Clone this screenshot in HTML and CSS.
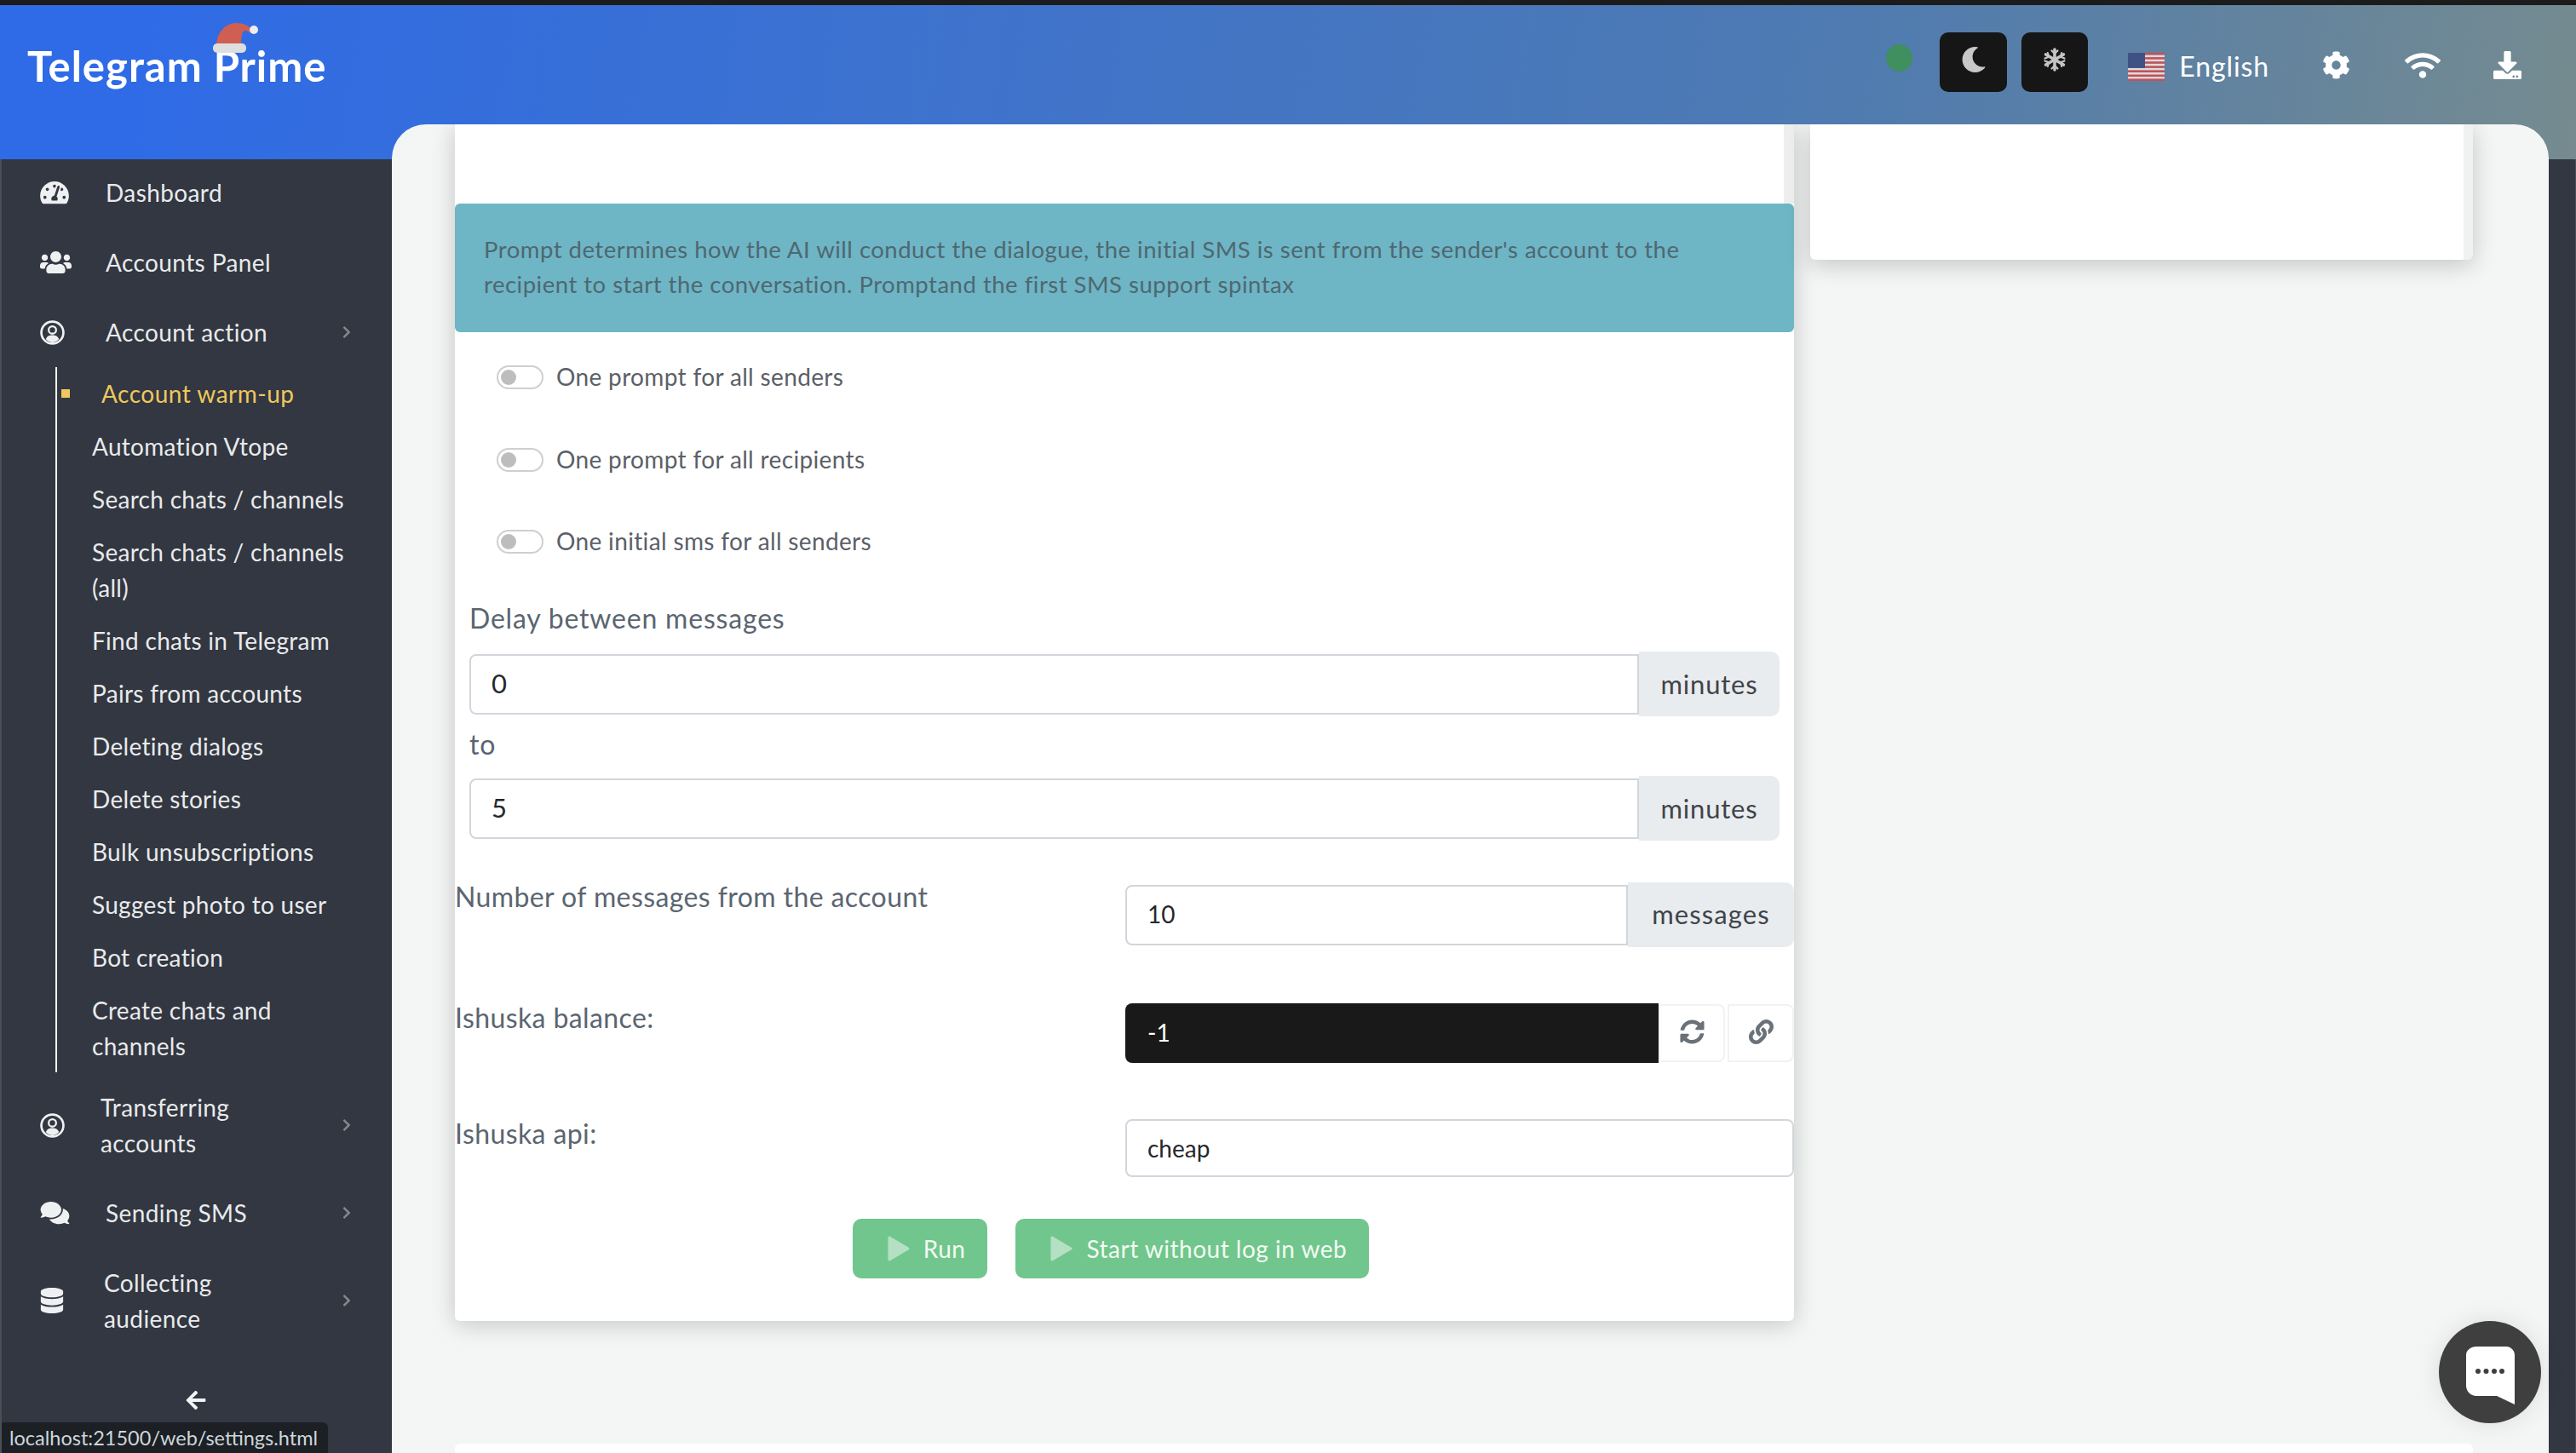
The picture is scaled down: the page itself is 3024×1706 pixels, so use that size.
FILE: index.html
```html
<!DOCTYPE html>
<html lang="en">
<head>
<meta charset="utf-8">
<title>Telegram Prime</title>
<link rel="stylesheet" href="styles.css">
</head>
<body>
<div class="strip"></div>
<header class="topbar">
  <div class="logo">
    <svg class="hat" viewBox="0 0 54 36"><path d="M4 25C5 12 13 1 27 0c9 0 15 3 19 8l-4 3c-3-3-5-3-7 0-2 5-2 10-2 14z" fill="#cf5f52"/><rect x="0" y="24" width="39" height="11" rx="5" fill="#dedede"/><circle cx="48" cy="8" r="5" fill="#ececec"/></svg>
    Telegram Prime
  </div>
  <div class="top-actions">
    <span class="dot"></span>
    <button class="dark-btn dark-btn--moon"><svg class="moon" viewBox="0 0 512 512"><path d="M283.211 512c78.962 0 151.079-35.925 198.857-94.792 7.068-8.708-.639-21.43-11.562-19.35-124.203 23.654-238.262-71.576-238.262-196.954 0-72.222 38.662-138.635 101.498-174.394 9.686-5.512 7.25-20.197-3.756-22.23A258.156 258.156 0 0 0 283.211 0c-141.309 0-256 114.511-256 256 0 141.309 114.511 256 256 256z"/></svg></button>
    <button class="dark-btn dark-btn--snow"><svg class="snow" viewBox="0 0 28 28"><g stroke-width="3.6" stroke-linecap="round" fill="none"><path d="M14 2v24M3.6 8l20.8 12M3.6 20l20.8-12"/></g><g stroke-width="2.2" stroke-linecap="round" fill="none"><path d="M10.5 3.5L14 7l3.500-3.500M10.500 24.500L14 21l3.500 3.500M2.500 12.500L7 10.800 5.800 6M25.500 15.500L21 17.200l1.200 4.800M2.500 15.500L7 17.200 5.800 22M25.500 12.500L21 10.800 22.200 6"/></g></svg></button>
    <svg class="flag" viewBox="0 0 43 33"><rect width="43" height="33" fill="#dcdcdc"/><g fill="#c0525a"><rect y="0" width="43" height="2.600"/><rect y="5.100" width="43" height="2.600"/><rect y="10.200" width="43" height="2.600"/><rect y="15.300" width="43" height="2.600"/><rect y="20.400" width="43" height="2.600"/><rect y="25.500" width="43" height="2.600"/><rect y="30.400" width="43" height="2.600"/></g><rect width="20" height="17.800" fill="#3f5285"/></svg>
    <span class="lang">English</span>
    <svg class="top-icon top-icon--gear" viewBox="0 0 512 512"><path d="M487.4 315.7l-42.6-24.6c4.300-23.200 4.300-47 0-70.200l42.600-24.600c4.900-2.800 7.100-8.600 5.500-14-11.100-35.600-30-67.800-54.700-94.600-3.800-4.100-10-5.100-14.800-2.300L380.800 110c-17.900-15.400-38.500-27.300-60.800-35.100V25.800c0-5.600-3.900-10.500-9.400-11.700-36.700-8.200-74.300-7.800-109.200 0-5.500 1.200-9.400 6.100-9.400 11.700V75c-22.200 7.900-42.800 19.800-60.800 35.100L88.700 85.500c-4.900-2.800-11-1.900-14.800 2.300-24.700 26.700-43.600 58.900-54.700 94.600-1.700 5.400.6 11.200 5.500 14L67.300 221c-4.300 23.200-4.300 47 0 70.200l-42.600 24.600c-4.900 2.800-7.100 8.600-5.500 14 11.100 35.600 30 67.800 54.700 94.600 3.800 4.100 10 5.100 14.800 2.300l42.600-24.600c17.900 15.400 38.500 27.300 60.800 35.100v49.200c0 5.600 3.900 10.500 9.400 11.700 36.700 8.200 74.300 7.800 109.200 0 5.500-1.200 9.400-6.100 9.400-11.700v-49.200c22.200-7.900 42.800-19.800 60.800-35.100l42.600 24.600c4.900 2.800 11 1.900 14.800-2.300 24.700-26.700 43.600-58.900 54.700-94.600 1.500-5.500-.7-11.300-5.600-14.100zM256 336c-44.100 0-80-35.900-80-80s35.900-80 80-80 80 35.900 80 80-35.900 80-80 80z"/></svg>
    <svg class="top-icon top-icon--wifi" viewBox="0 0 640 512"><path d="M634.91 154.88C457.74-8.99 182.19-8.93 5.09 154.88c-6.66 6.16-6.79 16.59-.35 22.98l34.24 33.97c6.14 6.1 16.02 6.23 22.4.38 145.92-133.68 371.3-133.71 517.25 0 6.38 5.85 16.26 5.71 22.4-.38l34.24-33.97c6.43-6.39 6.3-16.82-.36-22.98zM320 352c-35.35 0-64 28.65-64 64s28.65 64 64 64 64-28.65 64-64-28.65-64-64-64zm202.67-83.59c-115.26-101.93-290.21-101.82-405.34 0-6.9 6.1-7.12 16.69-.57 23.15l34.44 33.99c6 5.92 15.66 6.32 22.05.8 83.95-72.57 209.74-72.41 293.49 0 6.39 5.52 16.05 5.13 22.05-.8l34.44-33.99c6.56-6.46 6.33-17.06-.56-23.15z"/></svg>
    <svg class="top-icon top-icon--down" viewBox="0 0 512 512"><path d="M216 0h80c13.300 0 24 10.700 24 24v168h87.700c17.800 0 26.700 21.500 14.100 34.100L269.700 378.300c-7.500 7.500-19.800 7.500-27.300 0L90.100 226.100c-12.600-12.600-3.700-34.100 14.100-34.100H192V24c0-13.300 10.700-24 24-24zm296 376v112c0 13.300-10.700 24-24 24H24c-13.300 0-24-10.700-24-24V376c0-13.300 10.700-24 24-24h146.700l49 49c20.100 20.100 52.500 20.100 72.600 0l49-49H488c13.300 0 24 10.700 24 24zm-124 88c0-11-9-20-20-20s-20 9-20 20 9 20 20 20 20-9 20-20zm64 0c0-11-9-20-20-20s-20 9-20 20 9 20 20 20 20-9 20-20z"/></svg>
  </div>
</header>

<div class="layout">
  <aside class="sidebar">
    <nav class="nav">
      <a class="nav-link"><span class="nav-icon"><svg class="ico ico--gauge" viewBox="0 0 576 512"><path d="M288 32C128.940 32 0 160.940 0 320c0 52.800 14.250 102.260 39.060 144.800 5.610 9.620 16.300 15.200 27.440 15.200h443c11.140 0 21.830-5.580 27.440-15.200C561.750 422.260 576 372.800 576 320c0-159.060-128.940-288-288-288zm0 64c14.710 0 26.580 10.130 30.320 23.650-1.110 2.260-2.640 4.230-3.450 6.670l-9.220 27.670c-5.130 3.490-10.970 6.010-17.640 6.010-17.670 0-32-14.330-32-32S270.330 96 288 96zM96 384c-17.670 0-32-14.330-32-32s14.330-32 32-32 32 14.330 32 32-14.330 32-32 32zm48-160c-17.670 0-32-14.330-32-32s14.330-32 32-32 32 14.330 32 32-14.330 32-32 32zm246.770-72.410l-61.330 184C343.130 347.330 352 364.540 352 384c0 11.720-3.380 22.550-8.880 32H232.880c-5.500-9.450-8.880-20.280-8.880-32 0-33.940 26.500-61.430 59.900-63.590l61.340-184.010c4.170-12.560 17.730-19.450 30.360-15.170 12.570 4.190 19.350 17.790 15.170 30.360zm14.660 57.200l15.520-46.550c3.470-1.290 7.130-2.230 11.050-2.230 17.670 0 32 14.330 32 32s-14.330 32-32 32c-11.380-.01-20.890-6.280-26.570-15.220zM480 384c-17.670 0-32-14.330-32-32s14.330-32 32-32 32 14.330 32 32-14.330 32-32 32z"/></svg></span>Dashboard</a>
      <a class="nav-link"><span class="nav-icon"><svg class="ico ico--users" viewBox="0 0 640 512"><path d="M96 224c35.300 0 64-28.700 64-64s-28.700-64-64-64-64 28.700-64 64 28.700 64 64 64zm448 0c35.300 0 64-28.700 64-64s-28.700-64-64-64-64 28.700-64 64 28.700 64 64 64zm32 32h-64c-17.600 0-33.500 7.100-45.100 18.600 40.300 22.100 68.900 62 75.100 109.400h66c17.700 0 32-14.300 32-32v-32c0-35.300-28.700-64-64-64zm-256 0c61.900 0 112-50.100 112-112S381.900 32 320 32 208 82.100 208 144s50.100 112 112 112zm76.800 32h-8.300c-20.800 10-43.900 16-68.500 16s-47.600-6-68.500-16h-8.300C179.600 288 128 339.600 128 403.200V432c0 26.500 21.500 48 48 48h288c26.500 0 48-21.500 48-48v-28.800c0-63.600-51.600-115.200-115.200-115.200zm-223.700-13.400C161.500 263.100 145.600 256 128 256H64c-35.300 0-64 28.700-64 64v32c0 17.700 14.300 32 32 32h65.900c6.300-47.400 34.900-87.300 75.200-109.400z"/></svg></span>Accounts Panel</a>
      <a class="nav-link"><span class="nav-icon"><svg class="ico ico--user" viewBox="0 0 28 28"><circle cx="14" cy="14" r="12.500" fill="none" stroke="#eef0f2" stroke-width="2.600"/><circle cx="14" cy="11" r="4.200" fill="none" stroke="#eef0f2" stroke-width="2.200"/><path d="M6.500 21.500c1.500-3.500 4-4.500 7.500-4.500s6 1 7.500 4.500c-2 2.200-4.600 3.500-7.500 3.500s-5.500-1.300-7.500-3.500z"/></svg></span>Account action<svg class="chev" viewBox="0 0 320 512"><path d="M285.476 272.971L91.132 467.314c-9.373 9.373-24.569 9.373-33.941 0l-22.667-22.667c-9.357-9.357-9.375-24.522-.04-33.901L188.505 256 34.484 101.255c-9.335-9.379-9.317-24.544.04-33.901l22.667-22.667c9.373-9.373 24.569-9.373 33.941 0L285.475 239.030c9.373 9.372 9.373 24.568.001 33.941z"/></svg></a>
      <ul class="subnav">
        <li class="sub-link sub-link--active">Account warm-up</li>
        <li class="sub-link">Automation Vtope</li>
        <li class="sub-link">Search chats / channels</li>
        <li class="sub-link">Search chats / channels<br>(all)</li>
        <li class="sub-link">Find chats in Telegram</li>
        <li class="sub-link">Pairs from accounts</li>
        <li class="sub-link">Deleting dialogs</li>
        <li class="sub-link">Delete stories</li>
        <li class="sub-link">Bulk unsubscriptions</li>
        <li class="sub-link">Suggest photo to user</li>
        <li class="sub-link">Bot creation</li>
        <li class="sub-link">Create chats and<br>channels</li>
      </ul>
      <a class="nav-link"><span class="nav-icon nav-icon--w71"><svg class="ico ico--user" viewBox="0 0 28 28"><circle cx="14" cy="14" r="12.500" fill="none" stroke="#eef0f2" stroke-width="2.600"/><circle cx="14" cy="11" r="4.200" fill="none" stroke="#eef0f2" stroke-width="2.200"/><path d="M6.500 21.500c1.500-3.500 4-4.500 7.500-4.500s6 1 7.500 4.500c-2 2.200-4.600 3.500-7.500 3.500s-5.500-1.300-7.500-3.500z"/></svg></span>Transferring<br>accounts<svg class="chev" viewBox="0 0 320 512"><path d="M285.476 272.971L91.132 467.314c-9.373 9.373-24.569 9.373-33.941 0l-22.667-22.667c-9.357-9.357-9.375-24.522-.04-33.901L188.505 256 34.484 101.255c-9.335-9.379-9.317-24.544.04-33.901l22.667-22.667c9.373-9.373 24.569-9.373 33.941 0L285.475 239.030c9.373 9.372 9.373 24.568.001 33.941z"/></svg></a>
      <a class="nav-link"><span class="nav-icon"><svg class="ico ico--chat" viewBox="0 0 576 512"><path d="M416 192c0-88.400-93.100-160-208-160S0 103.600 0 192c0 34.300 14.100 65.900 38 92-13.400 30.200-35.500 54.200-35.800 54.500-2.200 2.300-2.800 5.700-1.500 8.700S4.800 352 8 352c36.600 0 66.900-12.300 88.700-25 32.200 15.700 70.300 25 111.300 25 114.900 0 208-71.600 208-160zm122 220c23.900-26 38-57.700 38-92 0-66.900-53.500-124.200-129.300-148.100.9 6.600 1.300 13.300 1.300 20.100 0 105.900-107.700 192-240 192-10.800 0-21.300-.8-31.700-1.900C207.800 439.600 281.800 480 368 480c41 0 79.100-9.200 111.300-25 21.800 12.700 52.100 25 88.700 25 3.200 0 6.100-1.900 7.300-4.800 1.300-2.900.7-6.300-1.500-8.700-.3-.3-22.400-24.200-35.800-54.500z"/></svg></span>Sending SMS<svg class="chev" viewBox="0 0 320 512"><path d="M285.476 272.971L91.132 467.314c-9.373 9.373-24.569 9.373-33.941 0l-22.667-22.667c-9.357-9.357-9.375-24.522-.04-33.901L188.505 256 34.484 101.255c-9.335-9.379-9.317-24.544.04-33.901l22.667-22.667c9.373-9.373 24.569-9.373 33.941 0L285.475 239.030c9.373 9.372 9.373 24.568.001 33.941z"/></svg></a>
      <a class="nav-link"><span class="nav-icon nav-icon--w75"><svg class="ico ico--db" viewBox="0 0 448 512"><path d="M448 73.143v45.714C448 159.143 347.667 192 224 192S0 159.143 0 118.857V73.143C0 32.857 100.333 0 224 0s224 32.857 224 73.143zM448 176v102.857C448 319.143 347.667 352 224 352S0 319.143 0 278.857V176c48.125 33.143 136.208 48.572 224 48.572S399.874 209.143 448 176zm0 160v102.857C448 479.143 347.667 512 224 512S0 479.143 0 438.857V336c48.125 33.143 136.208 48.572 224 48.572S399.874 369.143 448 336z"/></svg></span>Collecting<br>audience<svg class="chev" viewBox="0 0 320 512"><path d="M285.476 272.971L91.132 467.314c-9.373 9.373-24.569 9.373-33.941 0l-22.667-22.667c-9.357-9.357-9.375-24.522-.04-33.901L188.505 256 34.484 101.255c-9.335-9.379-9.317-24.544.04-33.901l22.667-22.667c9.373-9.373 24.569-9.373 33.941 0L285.475 239.030c9.373 9.372 9.373 24.568.001 33.941z"/></svg></a>
    </nav>
    <div class="collapse"><svg class="collapse-icon" viewBox="0 0 448 512"><path d="M257.500 445.100l-22.200 22.200c-9.400 9.400-24.600 9.400-33.900 0L7 273c-9.400-9.400-9.400-24.600 0-33.900L201.400 44.700c9.400-9.400 24.600-9.400 33.900 0l22.200 22.200c9.500 9.500 9.300 25-.4 34.300L136.600 216H424c13.300 0 24 10.700 24 24v32c0 13.300-10.700 24-24 24H136.600l120.500 114.800c9.800 9.300 10 24.800.4 34.300z"/></svg></div>
  </aside>

  <main class="panel">
    <div class="columns">
      <section class="card">
        <div class="card-top"></div>
        <div class="alert">Prompt determines how the AI will conduct the dialogue, the initial SMS is sent from the sender's account to the recipient to start the conversation. Promptand the first SMS support spintax</div>
        <div class="toggles">
          <label class="toggle-row"><span class="toggle"><span class="knob"></span></span>One prompt for all senders</label>
          <label class="toggle-row"><span class="toggle"><span class="knob"></span></span>One prompt for all recipients</label>
          <label class="toggle-row"><span class="toggle"><span class="knob"></span></span>One initial sms for all senders</label>
        </div>
        <div class="delay">
          <div class="delay-label">Delay between messages</div>
          <div class="group group--first"><div class="field field--big">0</div><div class="addon">minutes</div></div>
          <div class="delay-label delay-label--to">to</div>
          <div class="group group--second"><div class="field field--big">5</div><div class="addon">minutes</div></div>
        </div>
        <div class="form-row form-row--count">
          <div class="form-label">Number of messages from the account</div>
          <div class="group"><div class="field">10</div><div class="addon addon--wide">messages</div></div>
        </div>
        <div class="form-row form-row--balance">
          <div class="form-label">Ishuska balance:</div>
          <div class="group group--balance">
            <div class="field field--dark">-1</div>
            <button class="icon-btn"><svg class="btn-ico" viewBox="0 0 512 512"><path d="M370.720 133.280C339.458 104.008 298.888 87.962 255.848 88c-77.458.068-144.328 53.178-162.791 126.850-1.344 5.363-6.122 9.150-11.651 9.150H24.103c-7.498 0-13.194-6.807-11.807-14.176C33.933 94.924 134.813 8 256 8c66.448 0 126.791 26.136 171.315 68.685L463.030 40.970C478.149 25.851 504 36.559 504 57.941V192c0 13.255-10.745 24-24 24H345.941c-21.382 0-32.090-25.851-16.971-40.971l41.750-41.749zM32 296h134.059c21.382 0 32.090 25.851 16.971 40.971l-41.750 41.750c31.262 29.273 71.835 45.319 114.876 45.280 77.418-.07 144.315-53.144 162.787-126.849 1.344-5.363 6.122-9.150 11.651-9.150h57.304c7.498 0 13.194 6.807 11.807 14.176C478.067 417.076 377.187 504 256 504c-66.448 0-126.791-26.136-171.315-68.685L48.970 471.030C33.851 486.149 8 475.441 8 454.059V320c0-13.255 10.745-24 24-24z"/></svg></button>
            <button class="icon-btn"><svg class="btn-ico" viewBox="0 0 512 512"><path d="M326.612 185.391c59.747 59.809 58.927 155.698.36 214.590-.11.120-.24.250-.36.370l-67.200 67.200c-59.270 59.270-155.699 59.262-214.960 0-59.270-59.260-59.270-155.700 0-214.960l37.106-37.106c9.840-9.840 26.786-3.300 27.294 10.606.648 17.722 3.826 35.527 9.690 52.721 1.986 5.822.567 12.262-3.783 16.612l-13.087 13.087c-28.026 28.026-28.905 73.660-1.155 101.960 28.024 28.579 74.086 28.749 102.325.510l67.200-67.190c28.191-28.191 28.073-73.757 0-101.830-3.701-3.694-7.429-6.564-10.341-8.569a16.037 16.037 0 0 1-6.947-12.606c-.396-10.567 3.348-21.456 11.698-29.806l21.054-21.055c5.521-5.521 14.182-6.199 20.584-1.731a152.482 152.482 0 0 1 20.522 17.197zM467.547 44.449c-59.261-59.262-155.690-59.270-214.960 0l-67.200 67.200c-.12.120-.25.250-.36.370-58.566 58.892-59.387 154.781.36 214.590a152.454 152.454 0 0 0 20.521 17.196c6.402 4.468 15.064 3.789 20.584-1.731l21.054-21.055c8.350-8.350 12.094-19.239 11.698-29.806a16.037 16.037 0 0 0-6.947-12.606c-2.912-2.005-6.640-4.875-10.341-8.569-28.073-28.073-28.191-73.639 0-101.830l67.200-67.190c28.239-28.239 74.300-28.069 102.325.510 27.750 28.300 26.872 73.934-1.155 101.960l-13.087 13.087c-4.350 4.350-5.769 10.790-3.783 16.612 5.864 17.194 9.042 34.999 9.690 52.721.509 13.906 17.454 20.446 27.294 10.606l37.106-37.106c59.271-59.259 59.271-155.699.001-214.959z"/></svg></button>
          </div>
        </div>
        <div class="form-row form-row--api">
          <div class="form-label">Ishuska api:</div>
          <div class="group"><div class="field field--api">cheap</div></div>
        </div>
        <div class="actions">
          <button class="run-btn run-btn--run"><svg class="play" viewBox="0 0 26 30"><path d="M2 2l22 13L2 28z"/></svg>Run</button>
          <button class="run-btn run-btn--start"><svg class="play" viewBox="0 0 26 30"><path d="M2 2l22 13L2 28z"/></svg>Start without log in web</button>
        </div>
      </section>
      <aside class="side-card"></aside>
      <section class="next-card"></section>
    </div>
  </main>
</div>

<div class="status">localhost:21500/web/settings.html</div>
<button class="chat-fab"><svg class="chat-ico" viewBox="0 0 57 68"><path d="M12 0h35c5.500 0 10 4.500 10 10v58L36 58H12C5.500 58 0 52.500 0 46V10C0 4.500 5.500 0 12 0z" fill="#fff"/><g fill="#3f3f3f"><circle cx="14" cy="29" r="3"/><circle cx="23.500" cy="29" r="3"/><circle cx="33" cy="29" r="3"/><circle cx="42" cy="29" r="3"/></g></svg></button>
</body>
</html>
```

FILE: styles.css
```css
* { box-sizing: border-box; }
html, body { margin: 0; height: 1706px; overflow: hidden; }
body { font-family: "Lato", "Noto Sans", sans-serif; background: #323741; color: #56606a; }
button { font-family: inherit; border: 0; padding: 0; }

.strip { height: 6px; background: #1c1c1c; }

.topbar { height: 181px; display: flex; justify-content: space-between; padding: 0 63px 0 32px;
  background: linear-gradient(100deg, #2f6be6 6%, #4f7bb0 72%, #758b8f 100%); }
.logo { position: relative; margin-top: 41px; height: 60px; font-size: 49px; line-height: 60px; font-weight: 700; letter-spacing: 1px; color: #fff; }
.hat { position: absolute; left: 218px; top: -20px; width: 54px; height: 36px; }
.top-actions { display: flex; align-items: flex-start; }
.dot { width: 31px; height: 32px; margin-top: 46px; border-radius: 50%; background: #3f8f5f; }
.dark-btn { width: 79px; height: 70px; margin: 32px 0 0 32px; border-radius: 10px; background: #161616; display: flex; align-items: center; justify-content: center; }
.dark-btn--snow { margin-left: 17px; width: 78px; }
.moon { width: 30px; height: 30px; fill: #c8c8c8; margin-top: -6px; }
.snow { width: 28px; height: 28px; stroke: #c4c4c4; margin-top: -6px; }
.flag { width: 43px; height: 33px; margin: 56px 0 0 47px; }
.lang { margin: 50px 0 0 17px; font-size: 32px; line-height: 44px; letter-spacing: .9px; color: #fff; }
.top-icon { fill: #fff; }
.top-icon--gear { width: 33px; height: 33px; margin: 54px 0 0 62px; }
.top-icon--wifi { width: 42px; height: 34px; margin: 54px 0 0 64px; }
.top-icon--down { width: 35px; height: 33px; margin: 54px 0 0 61px; }

.layout { display: flex; height: 1519px; border-right: 1px solid #4a4e56; }
.sidebar { width: 460px; flex: none; background: #323741; box-shadow: inset 2px 0 0 #4a4e56; }
.nav { margin-top: -2px; display: flex; flex-direction: column; }
.nav-link { display: flex; align-items: center; padding: 20px 48px 20px 47px; font-size: 28px; line-height: 42px; letter-spacing: .4px; color: #e9eaec; }
.nav-icon { width: 77px; flex: none; display: flex; align-items: center; }
.nav-icon--w71 { width: 71px; }
.nav-icon--w75 { width: 75px; }
.ico { fill: #eef0f2; display: block; }
.ico--gauge { width: 34px; height: 30px; }
.ico--users { width: 37px; height: 30px; }
.ico--user { width: 29px; height: 29px; }
.ico--chat { width: 35px; height: 30px; }
.ico--db { width: 28px; height: 30px; }
.chev { width: 10px; height: 16px; margin-left: auto; fill: #85888d; }
.subnav { list-style: none; margin: 0 0 0 65px; padding: 0 0 0 41px; border-left: 2px solid #f0f0f0; }
.sub-link { padding: 10px 0; font-size: 28px; line-height: 42px; letter-spacing: .3px; color: #e9eaec; white-space: nowrap; }
.sub-link--active { position: relative; padding-left: 11px; letter-spacing: .5px; color: #efc75e; }
.sub-link--active::before { content: ""; position: absolute; left: -36px; top: 26px; width: 10px; height: 10px; background: #efc75e; }
.collapse { margin-top: 42px; display: flex; justify-content: center; }
.collapse-icon { width: 28px; height: 26px; fill: #f2f3f4; }

.panel { width: 2532px; height: 1560px; margin-top: -41px; position: relative; background: #f4f6f6; border-radius: 40px 40px 0 0; padding: 0 89px 0 74px; overflow: hidden; }
.columns { display: grid; grid-template-columns: 1572px 778px; column-gap: 19px; align-items: start; }
.card { background: #fff; height: 1405px; box-shadow: 0 4px 28px rgba(0,0,0,.2); padding-bottom: 49px; border-radius: 0 0 6px 6px; }
.card-top { height: 93px; border-right: 12px solid #eeeeee; }
.alert { height: 151px; padding: 33px 100px 33px 34px; border-radius: 6px; background: #6eb5c6; color: #4e6870; font-size: 27.500px; line-height: 41px; letter-spacing: .5px; }
.toggles { margin: 38px 0 0 49px; display: flex; flex-direction: column; gap: 68.500px; }
.toggle-row { display: flex; align-items: center; height: 28px; font-size: 28px; letter-spacing: .35px; color: #5b6068; }
.toggle { width: 55px; height: 28px; margin: 2px 15px 0 0; border: 2px solid #cfcfcf; border-radius: 14px; display: flex; align-items: center; padding-left: 3px; }
.knob { width: 18px; height: 18px; border-radius: 50%; background: #bdbdbd; }

.delay { padding: 0 17px; margin-top: 55px; }
.delay-label { font-size: 32px; line-height: 44px; letter-spacing: .8px; color: #5b6570; }
.delay-label--to { margin-top: 11px; }
.group { display: flex; align-items: center; }
.group--first { margin-top: 17px; }
.group--second { margin-top: 15px; }
.field { flex: 1; height: 71px; padding: 0 24px 2px; display: flex; align-items: center; background: #fff; border: 2px solid #d2d6dc; border-radius: 8px 0 0 8px; font-size: 28px; color: #26282c; }
.field--big { font-size: 31px; }
.addon { width: 165px; height: 76px; display: flex; align-items: center; justify-content: center; background: #e9ecef; border-radius: 0 10px 10px 0; font-size: 31px; letter-spacing: .8px; color: #3f444a; }
.addon--wide { width: 195px; letter-spacing: 1.1px; padding-bottom: 2px; }
.form-row { display: grid; grid-template-columns: 787px 1fr; }
.form-row--count { margin-top: 49px; }
.form-row--balance { margin-top: 66px; }
.form-row--api { margin-top: 66px; }
.form-label { font-size: 32px; line-height: 34px; letter-spacing: .4px; color: #5b6570; }
.field--dark { height: 70px; background: #191919; border: 0; color: #fff; padding-left: 26px; }
.field--api { height: 68px; padding-bottom: 0; border-radius: 8px; }
.icon-btn { width: 78px; height: 68px; background: #fff; border: 2px solid #f1f2f3; border-radius: 0 8px 8px 0; display: flex; align-items: center; justify-content: center; }
.icon-btn + .icon-btn { margin-left: 3px; }
.btn-ico { width: 29px; height: 29px; margin-top: -4px; fill: #6a7178; }
.actions { margin-top: 49px; padding-right: 32px; display: flex; justify-content: center; gap: 33px; }
.run-btn { height: 70px; display: flex; align-items: center; padding: 0 26px 0 41px; background: #71c68d; border-radius: 10px; color: #f3fbf2; font-size: 28px; letter-spacing: .5px; }
.play { width: 26px; height: 30px; margin-right: 16px; fill: #b5e0c3; stroke: #b5e0c3; stroke-width: 3; stroke-linejoin: round; }

.side-card { height: 159px; background: #fff; border-right: 11px solid #f1f1f1; border-radius: 0 0 6px 6px; box-shadow: 0 6px 28px rgba(0,0,0,.2); }
.next-card { grid-column: 1 / 3; height: 40px; margin-top: 144px; background: #fff; border-radius: 6px 6px 0 0; }

.status { position: fixed; left: 2px; bottom: 0; width: 383px; height: 36px; padding-left: 9px; background: #1c2024; border-radius: 0 6px 0 0; font-size: 23.500px; line-height: 37px; color: #ccd6dc; white-space: nowrap; }
.chat-fab { position: fixed; left: 2863px; top: 1551px; width: 120px; height: 120px; border-radius: 50%; background: #3f3f3f; box-shadow: 0 0 30px rgba(0,0,0,.1); display: flex; align-items: center; justify-content: center; }
.chat-ico { width: 57px; height: 68px; margin-top: 8px; }
```
